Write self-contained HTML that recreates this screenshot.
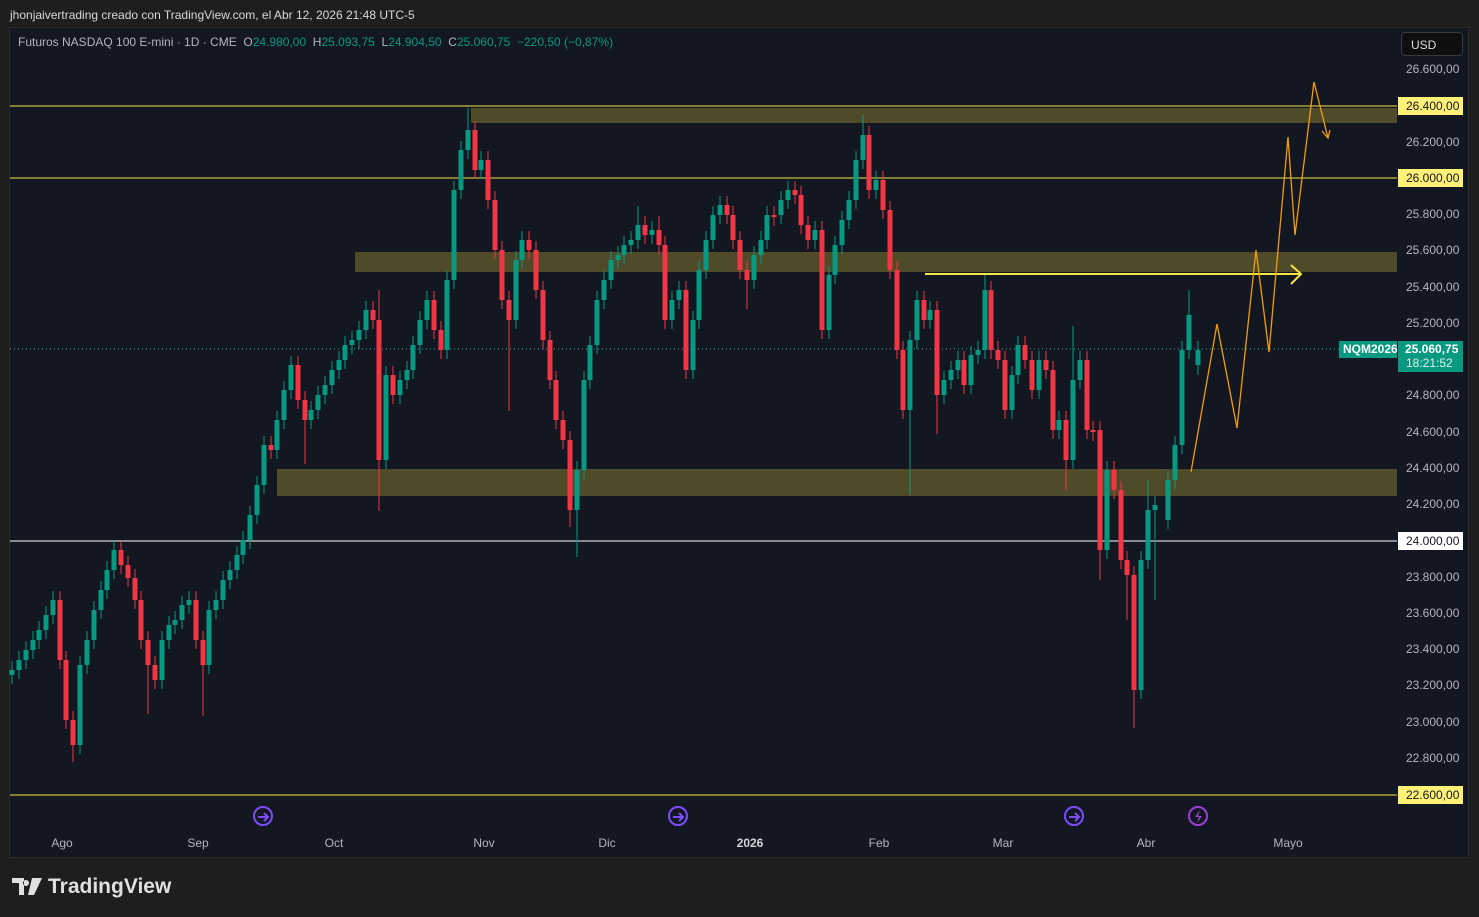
<!DOCTYPE html>
<html><head><meta charset="utf-8"><style>
html,body{margin:0;padding:0;background:#1e1e1e;width:1479px;height:917px;overflow:hidden;font-family:"Liberation Sans",sans-serif}
.top{position:absolute;left:10px;top:8px;font-size:12px;color:#d8d8d8}
.chart{position:absolute;left:9px;top:27px;width:1458px;height:829px;background:#131722;border:1px solid #2a2a2a}
.legend{position:absolute;left:18px;top:35px;font-size:12px;color:#b2b5be}
.legend b{font-weight:normal;color:#089981}
.usd{position:absolute;left:1401px;top:32px;width:62px;height:24px;border:1px solid #3a3a3a;border-radius:4px;background:#0f0f0f;color:#ddd;font-size:12px;line-height:24px;box-sizing:border-box;padding-left:9px}
.logo{position:absolute;left:12px;top:875px;color:#e0e0e0;font-size:21px;font-weight:bold;display:flex;align-items:center;gap:6px}
</style></head><body>
<div class="top">jhonjaivertrading creado con TradingView.com, el Abr 12, 2026 21:48 UTC-5</div>
<div class="chart"></div>
<svg width="1479" height="917" style="position:absolute;left:0;top:0" font-family="Liberation Sans, sans-serif">
<g fill="#4f4a28">
<rect x="471" y="108" width="926" height="15"/>
<rect x="355" y="252" width="1042" height="20"/>
<rect x="277" y="469" width="1120" height="27"/>
</g>
<line x1="10" y1="106" x2="1397" y2="106" stroke="#f5e642"/>
<line x1="10" y1="178" x2="1397" y2="178" stroke="#f5e642"/>
<line x1="10" y1="541" x2="1397" y2="541" stroke="#ffffff"/>
<line x1="10" y1="795" x2="1397" y2="795" stroke="#f5e642"/>
<line x1="10" y1="349" x2="1397" y2="349" stroke="#2fae9a" stroke-dasharray="1,3"/>
<!-- green candles -->
<path fill="none" stroke="#089981" stroke-width="1" d="M12 661V684M19 651V679M26 641V669M33 631V659M39 621V649M46 606V639M53 591V624M80 656V754M87 631V674M94 601V649M101 581V619M107 561V599M114 541V579M162 631V689M169 616V649M175 611V634M182 596V629M189 591V614M209 601V674M216 591V619M223 571V609M230 561V589M237 546V579M243 531V564M250 506V549M257 476V524M264 436V494M277 411V459M284 381V429M291 356V399M311 401V429M318 386V419M325 376V404M332 361V394M339 351V379M345 336V369M352 331V354M359 321V349M366 301V339M386 366V469M400 371V404M407 361V389M413 336V379M420 311V354M427 291V329M447 271V359M454 181V289M461 141V199M468 108V159M481 151V179M516 251V329M522 231V269M577 461V557M584 371V479M590 336V389M597 291V354M604 271V309M611 251V289M618 246V269M624 236V264M631 231V254M638 206V249M652 221V244M672 291V329M679 281V309M693 311V379M699 261V329M706 231V279M713 206V249M720 196V224M754 246V289M761 231V264M767 206V249M781 191V224M788 181V209M815 221V249M829 266V339M835 236V284M842 211V254M849 191V229M856 151V209M863 115V169M876 171V199M910 331V495M917 291V349M930 301V329M944 371V404M951 361V389M958 351V379M971 346V394M978 341V364M985 275V359M1012 366V419M1018 336V384M1039 351V399M1059 411V439M1073 326V469M1080 351V389M1107 461V559M1141 551V699M1148 480V569M1155 496V600M1168 471V529M1175 436V489M1182 341V454M1189 290V359M1198 341V375"/>
<path fill="none" stroke="#089981" stroke-width="5" d="M12 670V675M19 660V670M26 650V660M33 640V650M39 630V640M46 615V630M53 600V615M80 665V745M87 640V665M94 610V640M101 590V610M107 570V590M114 550V570M162 640V680M169 625V640M175 620V625M182 605V620M189 600V605M209 610V665M216 600V610M223 580V600M230 570V580M237 555V570M243 540V555M250 515V540M257 485V515M264 445V485M277 420V450M284 390V420M291 365V390M311 410V420M318 395V410M325 385V395M332 370V385M339 360V370M345 345V360M352 340V345M359 330V340M366 310V330M386 375V460M400 380V395M407 370V380M413 345V370M420 320V345M427 300V320M447 280V350M454 190V280M461 150V190M468 130V150M481 160V170M516 260V320M522 240V260M577 470V510M584 380V470M590 345V380M597 300V345M604 280V300M611 260V280M618 255V260M624 245V255M631 240V245M638 225V240M652 230V235M672 300V320M679 290V300M693 320V370M699 270V320M706 240V270M713 215V240M720 205V215M754 255V280M761 240V255M767 215V240M781 200V215M788 190V200M815 230V240M829 275V330M835 245V275M842 220V245M849 200V220M856 160V200M863 135V160M876 180V190M910 340V410M917 300V340M930 310V320M944 380V395M951 370V380M958 360V370M971 355V385M978 350V355M985 290V350M1012 375V410M1018 345V375M1039 360V390M1059 420V430M1073 380V460M1080 360V380M1107 470V550M1141 560V690M1148 510V560M1155 505V510M1168 480V520M1175 445V480M1182 350V445M1189 315V350M1198 350V365"/>
<!-- red candles -->
<path fill="none" stroke="#f23645" stroke-width="1" d="M60 591V669M66 651V729M73 711V762M121 541V574M128 556V587M135 569V609M141 591V649M148 631V714M155 656V689M196 591V649M203 631V716M271 436V459M298 356V409M305 391V464M373 301V329M379 290V511M393 366V404M434 291V339M441 321V359M475 121V179M488 151V209M495 191V259M502 241V309M509 291V411M529 231V259M536 241V299M543 281V349M550 331V389M556 371V429M563 411V449M570 431V527M645 216V244M659 216V254M665 236V329M686 281V379M727 196V224M733 206V249M740 231V279M747 261V309M774 206V226M795 181V204M801 186V234M808 216V249M822 221V339M869 126V199M883 171V219M890 201V279M897 261V359M903 341V419M924 291V329M937 301V434M964 351V394M991 281V359M998 341V369M1005 351V419M1025 336V369M1032 351V399M1046 351V379M1053 361V439M1066 411V490M1087 351V439M1093 421V441M1100 421V580M1114 461V499M1121 481V569M1127 551V620M1134 566V728"/>
<path fill="none" stroke="#f23645" stroke-width="5" d="M60 600V660M66 660V720M73 720V745M121 550V565M128 565V578M135 578V600M141 600V640M148 640V665M155 665V680M196 600V640M203 640V665M271 445V450M298 365V400M305 400V420M373 310V320M379 320V460M393 375V395M434 300V330M441 330V350M475 130V170M488 160V200M495 200V250M502 250V300M509 300V320M529 240V250M536 250V290M543 290V340M550 340V380M556 380V420M563 420V440M570 440V510M645 225V235M659 230V245M665 245V320M686 290V370M727 205V215M733 215V240M740 240V270M747 270V280M774 215V217M795 190V195M801 195V225M808 225V240M822 230V330M869 135V190M883 180V210M890 210V270M897 270V350M903 350V410M924 300V320M937 310V395M964 360V385M991 290V350M998 350V360M1005 360V410M1025 345V360M1032 360V390M1046 360V370M1053 370V430M1066 420V460M1087 360V430M1093 430V432M1100 430V550M1114 470V490M1121 490V560M1127 560V575M1134 575V690"/>
<line x1="925" y1="274" x2="1300" y2="274" stroke="#f5e642" stroke-width="2"/>
<polyline points="1291,265 1301,274 1291,284" fill="none" stroke="#f5e642" stroke-width="2"/>
<polyline points="1191,472 1217,324 1237,428 1256,250 1269,352 1288,137 1295,235 1314,82 1328,138" fill="none" stroke="#f39c12" stroke-width="1.3"/>
<polyline points="1322,131 1328,138 1330,130" fill="none" stroke="#f39c12" stroke-width="1.3"/>
<g font-size="12" fill="#b2b5be">
<text x="1406" y="73">26.600,00</text><text x="1406" y="146">26.200,00</text>
<text x="1406" y="218">25.800,00</text><text x="1406" y="254">25.600,00</text>
<text x="1406" y="291">25.400,00</text><text x="1406" y="327">25.200,00</text>
<text x="1406" y="399">24.800,00</text><text x="1406" y="436">24.600,00</text>
<text x="1406" y="472">24.400,00</text><text x="1406" y="508">24.200,00</text>
<text x="1406" y="581">23.800,00</text><text x="1406" y="617">23.600,00</text>
<text x="1406" y="653">23.400,00</text><text x="1406" y="689">23.200,00</text>
<text x="1406" y="726">23.000,00</text><text x="1406" y="762">22.800,00</text>
</g>
<g font-size="12" fill="#131722">
<rect x="1398" y="97" width="65" height="18" fill="#fff176"/><text x="1406" y="110">26.400,00</text>
<rect x="1398" y="169" width="65" height="18" fill="#fff176"/><text x="1406" y="182">26.000,00</text>
<rect x="1398" y="532" width="65" height="18" fill="#fff"/><text x="1406" y="545">24.000,00</text>
<rect x="1398" y="786" width="65" height="18" fill="#fff176"/><text x="1406" y="799">22.600,00</text>
</g>
<rect x="1339" y="341" width="58" height="17" fill="#089981"/>
<text x="1343" y="353" font-size="12" font-weight="bold" fill="#fff">NQM2026</text>
<rect x="1398" y="341" width="65" height="31" fill="#089981"/>
<text x="1405" y="353" font-size="12" font-weight="bold" fill="#fff">25.060,75</text>
<text x="1406" y="367" font-size="12" fill="#e0f2ef">18:21:52</text>
<g fill="none" stroke="#7b4dff" stroke-width="2">
<circle cx="263" cy="816" r="9"/><circle cx="678" cy="816" r="9"/><circle cx="1074" cy="816" r="9"/>
<path d="M258 817h10M264 813l4 4-4 4"/><path d="M673 817h10M679 813l4 4-4 4"/><path d="M1069 817h10M1075 813l4 4-4 4"/>
</g>
<circle cx="1198" cy="816" r="9" fill="none" stroke="#9c3fd9" stroke-width="2"/>
<path d="M1200 810l-5 7h4l-2 6 5-7h-4z" fill="#9c3fd9"/>
<g font-size="12" fill="#b2b5be" text-anchor="middle">
<text x="62" y="847">Ago</text><text x="198" y="847">Sep</text><text x="334" y="847">Oct</text>
<text x="484" y="847">Nov</text><text x="607" y="847">Dic</text><text x="750" y="847" font-weight="bold" fill="#d0d3da">2026</text>
<text x="879" y="847">Feb</text><text x="1003" y="847">Mar</text><text x="1146" y="847">Abr</text><text x="1288" y="847">Mayo</text>
</g>
</svg>
<div class="legend">Futuros NASDAQ 100 E-mini · 1D · CME &nbsp;O<b>24.980,00</b> &nbsp;H<b>25.093,75</b> &nbsp;L<b>24.904,50</b> &nbsp;C<b>25.060,75</b> &nbsp;<b>−220,50 (−0,87%)</b></div>
<div class="usd">USD</div>
<div class="logo"><svg width="30" height="18" viewBox="0 0 30 18"><path d="M0 0h12v17H7V5H0z M14 2a3 3 0 1 0 0.01 0z" fill="#e0e0e0"/><path d="M20 0h10l-8 17h-6z" fill="#e0e0e0"/></svg>TradingView</div>
</body></html>
